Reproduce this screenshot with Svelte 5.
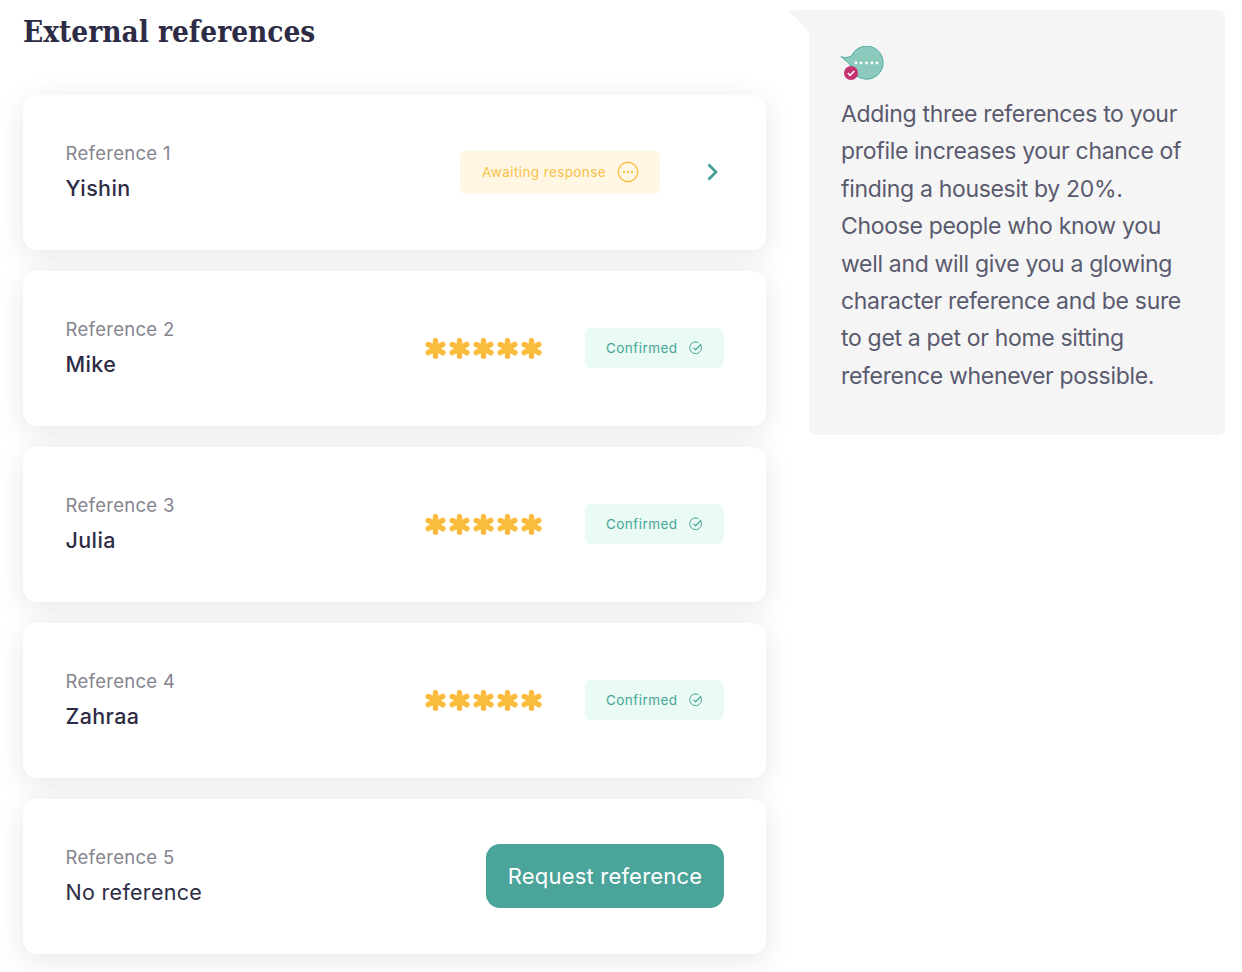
<script>
    const refs = [
        { label: 'Reference 1', name: 'Yishin', status: 'awaiting' },
        { label: 'Reference 2', name: 'Mike', status: 'confirmed' },
        { label: 'Reference 3', name: 'Julia', status: 'confirmed' },
        { label: 'Reference 4', name: 'Zahraa', status: 'confirmed' },
        { label: 'Reference 5', name: 'No reference', status: 'none' }
    ]
    const stars = [0, 1, 2, 3, 4]
</script>

<div class="page">
    <main class="main">
        <h1>External references</h1>
        <div class="list">
            {#each refs as ref}
                <section class="card">
                    <div class="who">
                        <div class="label">{ref.label}</div>
                        <div class="name" class:plain={ref.status === 'none'}>{ref.name}</div>
                    </div>
                    {#if ref.status === 'awaiting'}
                        <div class="awaiting">
                            <span>Awaiting response</span>
                            <svg width="22" height="22" viewBox="0 0 22 22" fill="none">
                                <circle cx="11" cy="11" r="9.7" stroke="#f9c04a" stroke-width="1.4" />
                                <circle cx="7" cy="11" r="1.2" fill="#f9c04a" />
                                <circle cx="11" cy="11" r="1.2" fill="#f9c04a" />
                                <circle cx="15" cy="11" r="1.2" fill="#f9c04a" />
                            </svg>
                        </div>
                        <svg class="chevron" width="14" height="18" viewBox="0 0 14 18" fill="none">
                            <path d="M2.500 1.500l7.500 7.500-7.500 7.500" stroke="#3f9f94" stroke-width="2.600" />
                        </svg>
                    {:else if ref.status === 'confirmed'}
                        <div class="stars">
                            {#each stars as s (s)}
                                <svg width="21" height="21" viewBox="0 0 21 21" stroke="#f9bc3c" stroke-width="5.500" stroke-linecap="round">
                                    <path d="M10.500 2.750v15.500M3.200 6.300l14.600 8.400M17.800 6.300l-14.600 8.400" />
                                </svg>
                            {/each}
                        </div>
                        <div class="confirmed">
                            <span>Confirmed</span>
                            <svg width="14" height="14" viewBox="0 0 14 14" fill="none" stroke="#4aa598" stroke-width="1">
                                <path d="M11.900 4.200A5.900 5.900 0 1 1 9.600 1.700" />
                                <path d="M4.400 6.800l2.200 2.200 5.600-6" stroke-width="1.200" />
                            </svg>
                        </div>
                    {:else}
                        <button class="request">Request reference</button>
                    {/if}
                </section>
            {/each}
        </div>
    </main>

    <aside class="tip">
        <svg class="tip-icon" width="45" height="36" viewBox="0 0 45 36">
            <path d="M1 10.500C4 12 7 12 11.500 10A16.500 16.500 0 1 1 11 22C10 16 5 15 1 10.500z" fill="#8ccabd" stroke="#4fa99b" stroke-width="1" />
            <g fill="#fff">
                <circle cx="16" cy="17" r="1.400" />
                <circle cx="21" cy="17" r="1.400" />
                <circle cx="26.500" cy="17" r="1.400" />
                <circle cx="32" cy="17" r="1.400" />
                <circle cx="37" cy="17" r="1.400" />
            </g>
            <circle cx="11" cy="27" r="7" fill="#c5326f" />
            <path d="M7.800 27l2.300 2.300 4.200-4.300" fill="none" stroke="#fff" stroke-width="1.600" />
        </svg>
        <p>Adding three references to your profile increases your chance of finding a housesit by 20%. Choose people who know you well and will give you a glowing character reference and be sure to get a pet or home sitting reference whenever possible.</p>
    </aside>
</div>

<style>
    :global(body) {
        margin: 0;
        background: #fff;
    }

    .page {
        display: flex;
        align-items: flex-start;
        gap: 43px;
        padding: 10px 17px 19px 23px;
        font-family: Inter, "Noto Sans", sans-serif;
    }

    .main {
        width: 743px;
        flex: none;
    }

    h1 {
        margin: 0 0 46px;
        height: 39px;
        font-family: "DejaVu Serif Condensed", "DejaVu Serif", serif;
        font-size: 29.500px;
        line-height: 43px;
        font-weight: 600;
        color: #2e2b45;
    }

    .list {
        display: flex;
        flex-direction: column;
        gap: 21.400px;
    }

    .card {
        height: 154.600px;
        box-sizing: border-box;
        padding: 0 42px 0 42.500px;
        display: flex;
        align-items: center;
        background: #fff;
        border-radius: 14px;
        box-shadow: 0 6px 28px rgba(40, 40, 60, 0.11);
    }

    .who {
        margin-right: auto;
        padding-bottom: 4px;
    }

    .label {
        font-size: 18.500px;
        line-height: 26px;
        letter-spacing: 0.3px;
        color: #85848f;
    }

    .name {
        margin-top: 9px;
        font-size: 21.500px;
        line-height: 26px;
        font-weight: 500;
        color: #2e2b45;
        letter-spacing: 0.4px;
    }

    .name.plain {
        font-weight: 400;
        letter-spacing: 0.3px;
    }

    .awaiting {
        width: 200px;
        height: 43px;
        box-sizing: border-box;
        padding-left: 22px;
        display: flex;
        align-items: center;
        gap: 11px;
        margin-right: 46px;
        background: #fff7e3;
        border-radius: 6px;
        font-size: 13.500px;
        letter-spacing: 0.4px;
        color: #f9c04a;
    }

    .chevron {
        margin-right: 4px;
    }

    .stars {
        display: flex;
        gap: 3px;
        margin-right: 43px;
    }

    .confirmed {
        width: 139px;
        height: 40px;
        box-sizing: border-box;
        padding-left: 21px;
        display: flex;
        align-items: center;
        gap: 11px;
        background: #e9fbf4;
        border-radius: 6px;
        font-size: 13.500px;
        letter-spacing: 0.45px;
        color: #45a598;
    }

    .request {
        width: 238px;
        height: 64px;
        padding: 0;
        border: none;
        border-radius: 14px;
        background: #4ba499;
        color: #fff;
        font-family: inherit;
        font-size: 22px;
        letter-spacing: 0.2px;
    }

    .tip {
        position: relative;
        width: 416px;
        height: 425px;
        box-sizing: border-box;
        padding: 36px 32px 0;
        background: #f5f5f6;
        border-radius: 0 6px 6px 6px;
    }

    .tip::before {
        content: "";
        position: absolute;
        left: -21px;
        top: 0;
        border-top: 22px solid #f5f5f6;
        border-left: 21px solid transparent;
    }

    .tip-icon {
        display: block;
        margin-left: -1px;
    }

    p {
        margin: 14px 0 0;
        font-size: 23px;
        line-height: 37.400px;
        letter-spacing: -0.32px;
        color: #5a5a6e;
    }
</style>
